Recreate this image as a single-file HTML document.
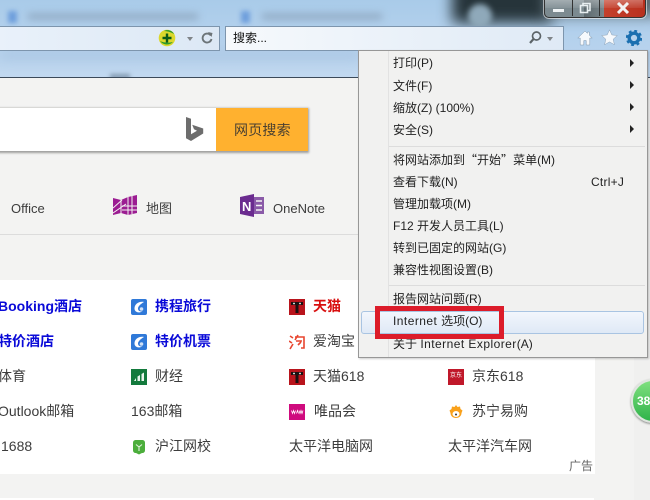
<!DOCTYPE html>
<html><head><meta charset="utf-8">
<style>
html,body{margin:0;padding:0;width:650px;height:500px;overflow:hidden;background:#f3f3f2}
body{position:relative;font-family:"Liberation Sans","Noto Sans CJK SC",sans-serif;color:#444}
.a{position:absolute}
.t{position:absolute;white-space:nowrap;font-size:14px;line-height:20px;color:#3c3c3c}
.b{color:#0a0ad8;font-weight:bold}
.r{color:#d80f0f;font-weight:bold}
.m{position:absolute;left:393px;white-space:nowrap;font-size:12px;line-height:16px;color:#222}
.m i{font-style:normal;letter-spacing:.45px}
.q{font-family:"Noto Sans CJK SC",sans-serif}
.ar{position:absolute;left:630px;width:0;height:0;border-left:4px solid #222;border-top:4px solid transparent;border-bottom:4px solid transparent}
.sq{position:absolute;width:16px;height:16px}
</style></head><body>

<div class="a" style="left:0;top:0;width:650px;height:78px;overflow:hidden;background:linear-gradient(180deg,#a9cbe9 0,#b2d0ec 40%,#bad4ee 75%,#c2d9f0 100%)">
  <div class="a" style="left:452px;top:-25px;width:100px;height:48px;background:#26343a;filter:blur(7px)"></div>
  <div class="a" style="left:545px;top:-20px;width:115px;height:36px;background:#5a676d;filter:blur(7px)"></div>
  <div class="a" style="left:468px;top:4px;width:24px;height:24px;border-radius:50%;background:#8fa9ba;filter:blur(3px)"></div>
  <div class="a" style="left:8px;top:11px;width:9px;height:12px;background:#6f9fdc;filter:blur(2.500px)"></div>
  <div class="a" style="left:241px;top:11px;width:9px;height:12px;background:#6f9fdc;filter:blur(2.500px)"></div>
  <div class="a" style="left:28px;top:14px;width:170px;height:5px;background:#8aa2ba;filter:blur(4px)"></div>
  <div class="a" style="left:262px;top:14px;width:120px;height:5px;background:#8aa2ba;filter:blur(4px)"></div>
  <div class="a" style="left:0;top:52px;width:360px;height:6px;background:#a3c0de;filter:blur(6px)"></div>
  <div class="a" style="left:110px;top:74px;width:20px;height:5px;background:#8198b0;filter:blur(2px)"></div>
</div>

<div class="a" style="left:544px;top:-2px;width:100px;height:18px;border:1px solid #333;border-radius:0 0 5px 5px;box-shadow:0 0 0 1px rgba(255,255,255,.55);background:linear-gradient(90deg,#7c8a90 0,#7c8a90 39%,#5d696e 39%,#7a868b 59%,#c5402c 59%,#b8301e 100%)"></div>
<div class="a" style="left:545px;top:0;width:98px;height:8px;background:linear-gradient(180deg,rgba(255,255,255,.3),rgba(255,255,255,.08))"></div>
<div class="a" style="left:572px;top:0;width:1px;height:16px;background:#333"></div>
<div class="a" style="left:599px;top:0;width:1px;height:16px;background:#333"></div>
<div class="a" style="left:553px;top:9px;width:11px;height:3px;background:#eef2f4"></div>
<svg class="a" style="left:578px;top:2px" width="16" height="12" viewBox="0 0 16 12"><path d="M2.500 3.500h7v7h-7zM5 3.500V1.500h7v7h-2.500" fill="none" stroke="#e8eef0" stroke-width="1.600"/></svg>
<svg class="a" style="left:615px;top:2px" width="16" height="12" viewBox="0 0 16 12"><path d="M3 1l10 10M13 1L3 11" stroke="#f2f2f2" stroke-width="3"/></svg>

<div class="a" style="left:-2px;top:26px;width:220px;height:23px;border:1px solid #7d95ad;background:linear-gradient(90deg,#e9f1fa,#dce8f5)"></div>
<svg class="a" style="left:158px;top:29px" width="18" height="18" viewBox="0 0 18 18"><circle cx="9" cy="9" r="8.300" fill="#dcd82c"/><path d="M2 12c3 4 9 5 13 1-4 1-9 1-13-1zM6 2c3-1.600 8-1 10 3-3-2-7-3-10-3z" fill="#2e9a2a"/><path d="M9 4.500v9M4.500 9h9" stroke="#0c5a18" stroke-width="2.400"/></svg>
<div class="a" style="left:187px;top:37px;width:0;height:0;border-top:4px solid #7f8488;border-left:3.500px solid transparent;border-right:3.500px solid transparent"></div>
<svg class="a" style="left:200px;top:31px" width="14" height="14" viewBox="0 0 14 14"><path d="M10.800 4.500A4.500 4.500 0 1 0 11.500 8" fill="none" stroke="#6c7478" stroke-width="1.800"/><path d="M8 1l4.500 1-1 4z" fill="#6c7478"/></svg>

<div class="a" style="left:225px;top:26px;width:337px;height:23px;border:1px solid #7d95ad;background:linear-gradient(90deg,#f6f9fc,#dfeaf6)"></div>
<div class="a" style="left:233px;top:30px;font-size:12px;line-height:16px;color:#111;white-space:nowrap">搜索...</div>
<svg class="a" style="left:528px;top:30px" width="15" height="15" viewBox="0 0 15 15"><circle cx="8.500" cy="6" r="4" fill="none" stroke="#5c6468" stroke-width="1.700"/><path d="M5.500 9L2 13" stroke="#5c6468" stroke-width="2.200"/></svg>
<div class="a" style="left:547px;top:37px;width:0;height:0;border-top:4px solid #7f8488;border-left:3.500px solid transparent;border-right:3.500px solid transparent"></div>

<svg class="a" style="left:577px;top:30px" width="16" height="16" viewBox="0 0 16 16"><path d="M8 1L.8 8h2.400v7h3.600v-4.500h2.400V15h3.600V8h2.400l-2.800-2.700V2h-2v1.400z" fill="#f6f9fc" stroke="#7f96ac" stroke-width=".5"/></svg>
<svg class="a" style="left:601px;top:29px" width="17" height="17" viewBox="0 0 17 17"><path d="M8.500.8l2.300 5.100 5.500.6-4.100 3.700 1.200 5.500-4.900-2.800-4.900 2.800 1.200-5.500L.7 6.500l5.500-.6z" fill="#f6f9fc" stroke="#8aa0b5" stroke-width=".5"/></svg>
<svg class="a" style="left:626px;top:30px" width="16" height="16" viewBox="0 0 16 16"><circle cx="8" cy="8" r="4.800" fill="none" stroke="#1a6fb0" stroke-width="3.400"/><circle cx="8" cy="8" r="7" fill="none" stroke="#1a6fb0" stroke-width="2.400" stroke-dasharray="2.800 2.700"/></svg>

<div class="a" style="left:0;top:77px;width:650px;height:1px;background:#3b4a5a"></div>

<!-- search -->
<div class="a" style="left:-2px;top:108px;width:310px;height:43px;background:#fff;box-shadow:0 1px 2px 1px rgba(0,0,0,.35)"></div>
<div class="a" style="left:216px;top:108px;width:92px;height:43px;background:#ffb12f"></div>
<div class="t" style="left:234px;top:120px;color:#4a4030;letter-spacing:.2px">网页搜索</div>
<svg class="a" style="left:185px;top:116px" width="20" height="27" viewBox="0 0 20 27"><path d="M1 1l5 1.800v15.400l6-3.500-3-1.400-1.800-4.600 11 3.800v5L6 25l-5-2.800z" fill="#6d6d6d"/></svg>

<div class="t" style="left:11px;top:199px;font-size:13px">Office</div>
<svg class="a" style="left:113px;top:195px" width="24" height="21" viewBox="0 0 24 21"><path d="M0 3l8 2 7-3 9-2v18l-9 2-7-2-8 2z" fill="#9b1c92"/><path d="M0 13L9 5M0 18L13 9M8 5v15M15 2v18M19 1v18M9 11h15M9 15h15" stroke="#f3f3f2" stroke-width="1"/></svg>
<div class="t" style="left:146px;top:199px;font-size:13px">地图</div>
<svg class="a" style="left:240px;top:194px" width="24" height="23" viewBox="0 0 24 23"><path d="M0 3L14 0v23L0 20z" fill="#6a2b8f"/><path d="M14 3h10v17H14z" fill="#8a5aa8"/><path d="M16 7h6M16 11.500h6M16 16h6" stroke="#f3f3f2" stroke-width="1.500"/><text x="2" y="17" font-family="Liberation Sans" font-weight="bold" font-size="13" fill="#fff">N</text></svg>
<div class="t" style="left:273px;top:199px;font-size:13px">OneNote</div>
<div class="a" style="left:0;top:234px;width:358px;height:1px;background:#dcdcdc"></div>

<!-- panel -->
<div class="a" style="left:0;top:280px;width:595px;height:194px;background:#fff"></div>
<div class="a" style="left:0;top:498px;width:594px;height:2px;background:#fff"></div>
<div class="a" style="left:634px;top:78px;width:16px;height:422px;background:#f0f0ef"></div>

<div class="t b" style="left:-2px;top:296px">Booking酒店</div>
<div class="t b" style="left:-2px;top:331px">特价酒店</div>
<div class="t" style="left:-2px;top:366px">体育</div>
<div class="t" style="left:-2px;top:401px">Outlook邮箱</div>
<div class="t" style="left:1px;top:436px">1688</div>

<svg class="sq" style="left:131px;top:299px" viewBox="0 0 16 16"><rect width="16" height="16" rx="2" fill="#2f79d8"/><path d="M13 3C8 2 3.500 5 3.500 9.500c0 3.500 4 5 8 3-3 .2-4.500-1-4.500-3S9.500 5 13 3z" fill="#fff"/><circle cx="10.500" cy="10" r="1.800" fill="#cfe0f5"/></svg>
<div class="t b" style="left:155px;top:296px">携程旅行</div>
<svg class="sq" style="left:131px;top:334px" viewBox="0 0 16 16"><rect width="16" height="16" rx="2" fill="#2f79d8"/><path d="M13 3C8 2 3.500 5 3.500 9.500c0 3.500 4 5 8 3-3 .2-4.500-1-4.500-3S9.500 5 13 3z" fill="#fff"/><circle cx="10.500" cy="10" r="1.800" fill="#cfe0f5"/></svg>
<div class="t b" style="left:155px;top:331px">特价机票</div>
<svg class="sq" style="left:131px;top:369px" viewBox="0 0 16 16"><rect width="16" height="16" fill="#137a3c"/><path d="M3 12l2-3v3zM6.500 12V7.500L9 6v6zM10.500 12V5L13 3.500V12z" fill="#e8f5ec"/></svg>
<div class="t" style="left:155px;top:366px">财经</div>
<div class="t" style="left:131px;top:401px">163邮箱</div>
<svg class="sq" style="left:131px;top:439px" viewBox="0 0 16 16"><path d="M2 4c0-2 1-3 3-3h6c2 0 3 1 3 3v7c0 2-1 3-3 3l-3 1.500L5 14c-2 0-3-1-3-3z" fill="#4cae3c"/><path d="M8 12V7M8 8L5 5.500M8 8l3-2.500" stroke="#dff2db" stroke-width="1.100" fill="none"/></svg>
<div class="t" style="left:155px;top:436px">沪江网校</div>

<svg class="sq" style="left:289px;top:299px" viewBox="0 0 16 16"><rect width="16" height="16" fill="#b8141c"/><path d="M2 3h12v3H9.500v8h-3V6H2z" fill="#1a1010"/><circle cx="5" cy="4.500" r=".9" fill="#fff"/><circle cx="11" cy="4.500" r=".9" fill="#fff"/></svg>
<div class="t r" style="left:313px;top:296px">天猫</div>
<svg class="sq" style="left:289px;top:334px" viewBox="0 0 16 16"><path d="M1 2l3 2M0 7l3 2M1 15l3-5M6 3h9v11h-3M9 1L6 6M7 7h6M9 11l3-3" stroke="#e8452f" stroke-width="1.600" fill="none"/></svg>
<div class="t" style="left:313px;top:331px">爱淘宝</div>
<svg class="sq" style="left:289px;top:369px" viewBox="0 0 16 16"><rect width="16" height="16" fill="#b8141c"/><path d="M2 3h12v3H9.500v8h-3V6H2z" fill="#1a1010"/><circle cx="5" cy="4.500" r=".9" fill="#fff"/><circle cx="11" cy="4.500" r=".9" fill="#fff"/></svg>
<div class="t" style="left:313px;top:366px">天猫618</div>
<svg class="sq" style="left:289px;top:404px" viewBox="0 0 16 16"><rect width="16" height="16" fill="#cf0b7e"/><path d="M2.500 6.500l1 3 1-3 1 3 1-3M7.500 9.500l1-3 1 3M10 6.500l1 3 1-3 1 3 1-3" stroke="#fff" stroke-width=".8" fill="none"/></svg>
<div class="t" style="left:314px;top:401px">唯品会</div>
<div class="t" style="left:289px;top:436px">太平洋电脑网</div>

<div class="a" style="left:448px;top:369px;width:16px;height:16px;background:#c0182a;color:#fff;font-size:6px;line-height:14px;text-align:center;overflow:hidden;white-space:nowrap">京东</div>
<div class="t" style="left:472px;top:366px">京东618</div>
<svg class="sq" style="left:448px;top:404px" viewBox="0 0 16 16"><path d="M8 1l1.500 2 2.500-.5.500 2.500 2 1.500-1 2.500c0 3-2.500 5-5.500 5s-5.500-2-5.500-5l-1-2.500 2-1.500.5-2.500 2.500.5z" fill="#f9a11b"/><ellipse cx="8" cy="10" rx="3.500" ry="3" fill="#fff"/><circle cx="8" cy="10.500" r="1" fill="#333"/></svg>
<div class="t" style="left:472px;top:401px">苏宁易购</div>
<div class="t" style="left:448px;top:436px">太平洋汽车网</div>
<div class="a" style="left:569px;top:458px;font-size:12px;line-height:16px;color:#666;white-space:nowrap">广告</div>

<!-- green badge -->
<div class="a" style="left:631px;top:379px;width:44px;height:44px;border-radius:50%;background:linear-gradient(180deg,#7fe07f,#2fb34a);border:2px solid #dfe6df;box-shadow:0 1px 2px rgba(0,0,0,.45);box-sizing:border-box"></div>
<div class="a" style="left:637px;top:393px;font-size:12px;font-weight:bold;line-height:16px;color:#fff;white-space:nowrap">38</div>

<!-- menu -->
<div class="a" style="left:358px;top:50px;width:288px;height:306px;background:#f1f1f0;border:1px solid #979797;box-shadow:1px 1px 2px rgba(0,0,0,.2)"></div>
<div class="a" style="left:388px;top:51px;width:1px;height:306px;background:#e2e2e2"></div>
<div class="a" style="left:389px;top:146px;width:256px;height:1px;background:#dcdcdc"></div>
<div class="a" style="left:389px;top:285px;width:256px;height:1px;background:#dcdcdc"></div>
<div class="a" style="left:361px;top:311px;width:281px;height:21px;border:1px solid #a9c4e2;border-radius:3px;background:linear-gradient(180deg,#f2f6fc,#dfe9f6)"></div>

<div class="m" style="top:55px">打印(P)</div><div class="ar" style="top:59px"></div>
<div class="m" style="top:78px">文件(F)</div><div class="ar" style="top:81px"></div>
<div class="m" style="top:100px">缩放(Z) (100%)</div><div class="ar" style="top:103px"></div>
<div class="m" style="top:122px">安全(S)</div><div class="ar" style="top:125px"></div>
<div class="m" style="top:152px">将网站添加到<span class="q">“</span>开始<span class="q">”</span>菜单(M)</div>
<div class="m" style="top:174px">查看下载(N)</div>
<div class="m" style="left:591px;top:174px;letter-spacing:.25px">Ctrl+J</div>
<div class="m" style="top:196px">管理加载项(M)</div>
<div class="m" style="top:218px">F12 开发人员工具(L)</div>
<div class="m" style="top:240px">转到已固定的网站(G)</div>
<div class="m" style="top:262px">兼容性视图设置(B)</div>
<div class="m" style="top:291px">报告网站问题(R)</div>
<div class="m" style="top:313px"><i>Internet </i>选项(O)</div>
<div class="m" style="top:336px">关于 <i>Internet Explorer</i>(A)</div>

<div class="a" style="left:375px;top:306px;width:119px;height:23px;border:5px solid #dc1c2a"></div>
</body></html>
